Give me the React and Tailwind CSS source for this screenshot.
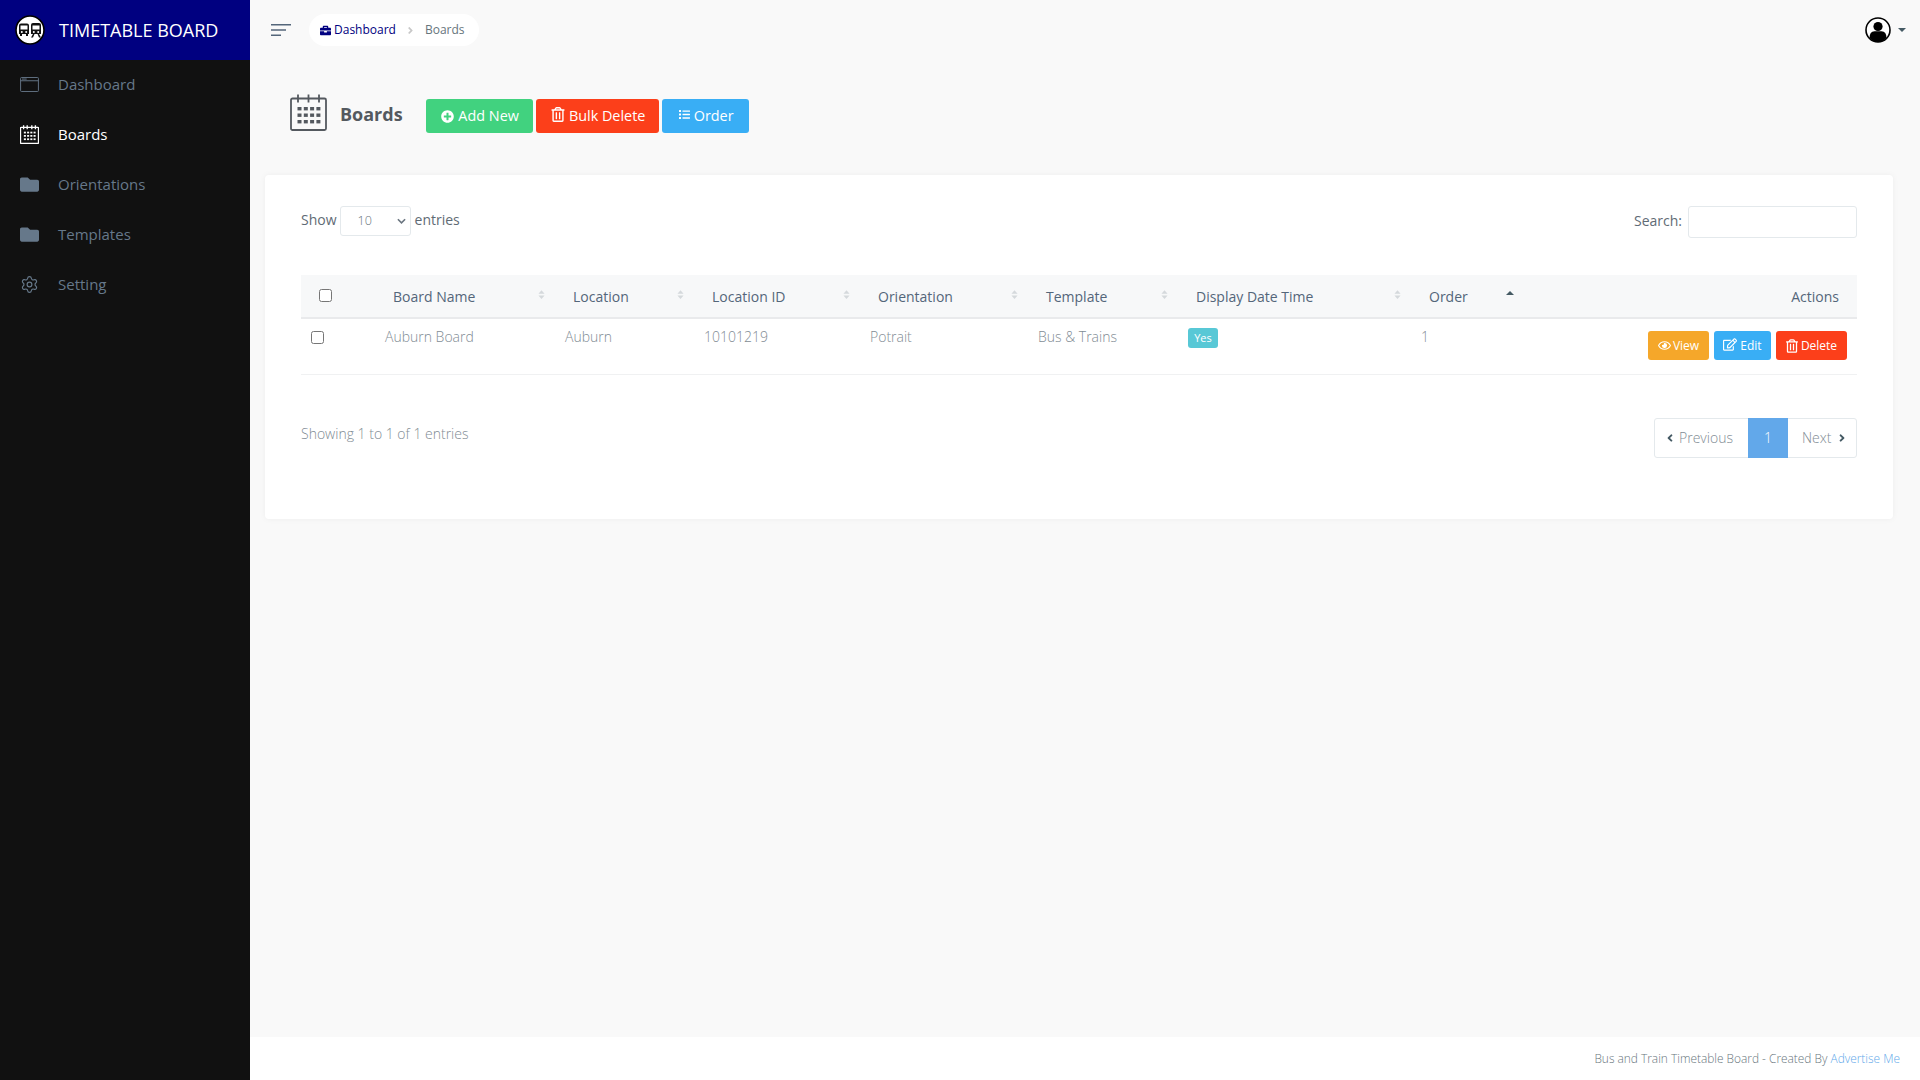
import React from "react";
import { FaFolder, FaPlusCircle, FaRegTrashAlt, FaList, FaRegEye, FaRegEdit, FaAngleLeft, FaAngleRight, FaBriefcase } from "react-icons/fa";
import { Settings } from "lucide-react";

const Cal = ({ className, sw = 1.6, ticks = [8, 18.5, 29] }) => (
  <svg viewBox="0 0 37 37" className={className} fill="none" stroke="currentColor" strokeWidth={sw}>
    <rect x="1" y="4.5" width="35" height="31.5" rx="1.5" />
    <path d={ticks.map((t) => "M" + t + " 0.5v8").join("")} />
    <g fill="currentColor" stroke="none">
      {[7.5, 13.8, 20.1, 26.4].map((x) => [13, 19.5, 26].map((y) => <rect key={x + "-" + y} x={x} y={y} width="4" height="3.4" />))}
    </g>
  </svg>
);

const Browser = () => (
  <svg viewBox="0 0 20 16" className="w-[19px] h-[15px]" fill="none" stroke="currentColor" strokeWidth="1">
    <rect x="0.5" y="0.5" width="19" height="15" rx="1" />
    <path d="M0.5 4h19M2 2.2h5" />
  </svg>
);

const Logo = () => (
  <svg viewBox="0 0 30 30" className="w-[30px] h-[30px] shrink-0">
    <circle cx="15" cy="15" r="14" fill="#fff" stroke="#000" strokeWidth="1.6" />
    <g fill="#111">
      <path d="M4 10.5q0-2 2-2h6q2 0 2 2v8.5h-1v2h-2v-2H7v2H5v-2H4z" />
      <path d="M16 10q0-2 2-2h6q2 0 2 2v9h-10z" />
      <path d="M18 19l-2 3.5h2l1.5-3.5zM24 19l2 3.5h-2l-1.5-3.5z" />
    </g>
    <g fill="#fff">
      <rect x="5.5" y="10.5" width="7" height="4" />
      <rect x="17.5" y="10.5" width="7" height="4" />
      <circle cx="6.8" cy="17" r="1" />
      <circle cx="11.2" cy="17" r="1" />
      <circle cx="18.8" cy="17" r="1" />
      <circle cx="23.2" cy="17" r="1" />
    </g>
  </svg>
);

const Avatar = () => (
  <svg viewBox="0 0 26 26" className="w-[26px] h-[26px]">
    <circle cx="13" cy="13" r="12" fill="#fff" stroke="#000" strokeWidth="1.6" />
    <circle cx="13" cy="9.5" r="4.6" fill="#000" />
    <path d="M4.5 21q0-6.5 5-6.8h7q5 .3 5 6.8q-3.5 4-8.5 4t-8.5-4z" fill="#000" />
  </svg>
);

const Sort = ({ active }) => (
  <svg viewBox="0 0 8 12" className={active ? "w-[10px] h-[12px] shrink-0" : "w-[7px] h-[11px] shrink-0"}>
    {active ? (
      <path d="M0 7L4 3L8 7z" fill="#455a64" />
    ) : (
      <path d="M0.5 5L4 1L7.5 5zM0.5 7L4 11L7.5 7z" fill="#d5d9dc" />
    )}
  </svg>
);

const Th = ({ children, active }) => (
  <th className="pl-4 pr-3 font-normal text-left align-middle">
    <div className="flex items-center justify-between">
      <span>{children}</span>
      <span className={active ? "-mt-[5px] -mr-[3px] flex" : "-mt-[4px] flex"}><Sort active={active} /></span>
    </div>
  </th>
);

const nav = [
  { label: "Dashboard", icon: <Browser /> },
  { label: "Boards", active: true, icon: <Cal className="w-[19px] h-[19px]" sw={2.6} ticks={[7, 14, 23, 30]} /> },
  { label: "Orientations", icon: <FaFolder className="w-[19px] h-[19px]" /> },
  { label: "Templates", icon: <FaFolder className="w-[19px] h-[19px]" /> },
  { label: "Setting", icon: <Settings className="w-[19px] h-[19px]" strokeWidth={1.5} /> },
];

const cols = [76, 180, 139, 166, 168, 150, 233, 111, 333];

export default function App() {
  return (
    <div className="flex h-screen bg-[#f9f9f9] font-['Open_Sans',sans-serif] font-light text-[#67757c] overflow-hidden">
      <aside className="w-[250px] shrink-0 bg-[#111111] flex flex-col">
        <div className="h-[60px] bg-[#000080] flex items-center pl-[15px] gap-[14px] text-white text-[18px] font-normal">
          <Logo />
          <span>TIMETABLE BOARD</span>
        </div>
        <nav className="flex flex-col -mt-px">
          {nav.map((n) => (
            <div key={n.label} className={"h-[50px] flex items-center pl-5 text-[15px] font-normal " + (n.active ? "text-white" : "text-[#66788a]")}>
              <span className="w-[38px] flex items-center shrink-0">{n.icon}</span>
              <span>{n.label}</span>
            </div>
          ))}
        </nav>
      </aside>

      <main className="flex-1 flex flex-col min-w-0">
        <header className="h-[60px] shrink-0 flex items-center pl-[21px] pr-[14px]">
          <svg viewBox="0 0 20 12" className="w-5 h-3 text-[#54667a]" fill="none" stroke="currentColor" strokeWidth="1.4">
            <path d="M0 .7h20M0 6h15M0 11.3h10" />
          </svg>
          <div className="ml-[18px] h-8 pl-[11px] pr-[14px] rounded-full bg-white flex items-center text-[12px] font-normal">
            <FaBriefcase className="w-[11px] h-[11px] text-[#000080] mr-[3px]" />
            <span className="text-[#000080]">Dashboard</span>
            <FaAngleRight className="w-[11px] h-[11px] mx-[9px] text-[#c8c8c8]" />
            <span className="text-[#67757c]">Boards</span>
          </div>
          <div className="ml-auto flex items-center gap-[7px]">
            <Avatar />
            <span className="w-0 h-0 border-x-[4px] border-x-transparent border-t-[4px] border-t-[#455a64]" />
          </div>
        </header>

        <section className="flex items-center h-[115px] pl-10 pb-[3px]">
          <Cal className="w-[37px] h-[37px] text-[#54595f] mb-[8px]" sw={1.8} />
          <h1 className="ml-[13px] text-[18px] font-bold text-[#54595f] mr-[23px] mb-[4px]">Boards</h1>
          <div className="flex gap-[3px] text-white text-[14.4px] font-normal">
            <button className="h-[34px] w-[107px] rounded-[3px] bg-[#41d27f] flex items-center justify-center gap-[4px] pl-[2px]"><FaPlusCircle className="w-[13px] h-[13px]" />Add New</button>
            <button className="h-[34px] w-[123px] rounded-[3px] bg-[#fc3f1a] flex items-center justify-center gap-[4px] pl-[2px]"><FaRegTrashAlt className="w-[14px] h-[15px] -mt-[3px]" />Bulk Delete</button>
            <button className="h-[34px] w-[87px] rounded-[3px] bg-[#39aef5] flex items-center justify-center gap-[4px] pl-[2px]"><FaList className="w-[11px] h-[11px] -mt-[3px]" />Order</button>
          </div>
        </section>

        <div className="pl-[15px] pr-[27px]">
          <div className="h-[344px] bg-white rounded-[4px] shadow-[0_0_6px_rgba(0,0,0,0.05)] pt-[31px] px-9">
            <div className="flex justify-between items-start h-[69px] text-[14px] font-normal text-[#5f6b75]">
              <label className="flex items-center h-[29px]">
                <span className="mr-[3px] -mt-[2px]">Show</span>
                <span className="w-[71px] h-[30px] border border-[#e4e9ec] rounded-[3px] pl-[17px] pr-[4px] flex items-center justify-between text-[12.6px] font-light text-[#67757c]">
                  <span className="mt-[2px]">10</span>
                  <svg viewBox="0 0 10 6" className="w-[9px] h-[6px] text-[#6b7680]" fill="none" stroke="currentColor" strokeWidth="1.8"><path d="M1 1l4 4 4-4" /></svg>
                </span>
                <span className="ml-[4px] -mt-[2px]">entries</span>
              </label>
              <label className="flex items-center">
                <span className="mr-[6px] -mt-[3px]">Search:</span>
                <input className="w-[169px] h-8 border border-[#e4e9ec] rounded-[3px] bg-white" />
              </label>
            </div>

            <table className="w-[1556px] table-fixed border-collapse text-[14px]">
              <colgroup>
                {cols.map((w, i) => <col key={i} style={{ width: w }} />)}
              </colgroup>
              <thead>
                <tr className="h-[43px] bg-[#f7f8f9] border-b-2 border-[#e9eaec] text-[#54667a]">
                  <th className="pl-[18px] pb-[1px] text-left font-normal">
                    <input type="checkbox" className="block w-[13px] h-[13px] appearance-auto" />
                  </th>
                  <Th>Board Name</Th>
                  <Th>Location</Th>
                  <Th>Location ID</Th>
                  <Th>Orientation</Th>
                  <Th>Template</Th>
                  <Th>Display Date Time</Th>
                  <Th active>Order</Th>
                  <th className="pr-[18px] text-right font-normal">Actions</th>
                </tr>
              </thead>
              <tbody>
                <tr className="h-[56px] border-b border-[#f0f1f2] text-[#7f8c94]">
                  <td className="pl-[10px] pt-[3px] align-top"><input type="checkbox" className="block mt-[9px] w-[13px] h-[13px]" /></td>
                  <td className="pl-2 pt-[3px] align-top leading-[30px]">Auburn Board</td>
                  <td className="pl-2 pt-[3px] align-top leading-[30px]">Auburn</td>
                  <td className="pl-2 pt-[3px] align-top leading-[30px]">10101219</td>
                  <td className="pl-2 pt-[3px] align-top leading-[30px]">Potrait</td>
                  <td className="pl-2 pt-[3px] align-top leading-[30px]">Bus &amp; Trains</td>
                  <td className="pl-2 pt-[9px] align-top">
                    <span className="flex items-center justify-center w-[30px] h-5 rounded-[3px] bg-[#58c8d6] text-white text-[11px] font-normal">Yes</span>
                  </td>
                  <td className="pl-2 pt-[3px] align-top leading-[30px]">1</td>
                  <td className="pt-[12px] pr-[10px] align-top">
                    <div className="flex justify-end gap-[5px] text-white text-[12px] font-normal">
                      <button className="w-[61px] h-[29px] rounded-[3px] bg-[#f5a72a] flex items-center justify-center gap-[2px]"><FaRegEye className="w-[13px] h-[13px] -mt-[1px]" />View</button>
                      <button className="w-[57px] h-[29px] rounded-[3px] bg-[#39aef5] flex items-center justify-center gap-[3px]"><FaRegEdit className="w-[14px] h-[13px] -mt-[2px]" />Edit</button>
                      <button className="w-[71px] h-[29px] rounded-[3px] bg-[#fc3f1a] flex items-center justify-center gap-[3px]"><FaRegTrashAlt className="w-[12px] h-[14px]" />Delete</button>
                    </div>
                  </td>
                </tr>
              </tbody>
            </table>

            <div className="flex justify-between items-start mt-[43px] text-[14px]">
              <span className="mt-[5px] text-[#7f8c94]">Showing 1 to 1 of 1 entries</span>
              <div className="flex h-10 border border-[#e4e9ec] rounded-[3px] text-[#7f8c94]">
                <span className="w-[93px] flex items-center pl-[9px] gap-[3px]"><FaAngleLeft className="w-3 h-3 text-[#455a64]" />Previous</span>
                <span className="w-10 -my-px flex items-center justify-center bg-[#62a8ea] text-white">1</span>
                <span className="w-[68px] flex items-center pl-[14px] gap-[5px]">Next<FaAngleRight className="w-3 h-3 text-[#455a64]" /></span>
              </div>
            </div>
          </div>
        </div>

        <footer className="mt-auto h-[43px] shrink-0 bg-white flex items-center justify-end pr-5 text-[11.9px]">
          <span>Bus and Train Timetable Board - Created By <span className="text-[#62a8ea]">Advertise Me</span></span>
        </footer>
      </main>
    </div>
  );
}
